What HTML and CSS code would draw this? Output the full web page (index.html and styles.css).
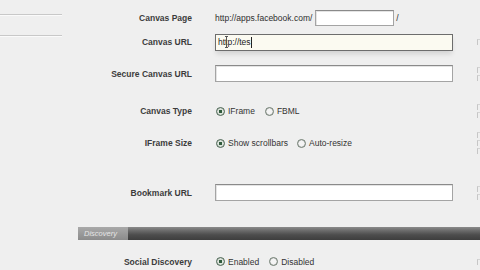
FILE: index.html
```html
<!DOCTYPE html>
<html>
<head>
<meta charset="utf-8">
<link rel="stylesheet" href="styles.css">
</head>
<body>
<div class="page">
  <aside class="side">
    <div class="rule r1"></div>
    <div class="rule r2"></div>
  </aside>
  <main class="main">
    <div class="topline"></div>
    <div class="form">
      <div class="row h19 m7">
        <div class="label">Canvas Page</div>
        <div class="value">
          <span class="txt">http://apps.facebook.com/</span>
          <span class="input short"></span>
          <span class="txt slash">/</span>
        </div>
        <div class="help"></div>
      </div>
      <div class="row h18 m6">
        <div class="label">Canvas URL</div>
        <div class="value">
          <span class="input wide focus"><span class="typed">http://tes</span><span class="caret"></span><span class="ibeam"></span></span>
        </div>
        <div class="help"><i class="mk"></i></div>
      </div>
      <div class="row h19 m13">
        <div class="label">Secure Canvas URL</div>
        <div class="value"><span class="input wide"></span></div>
        <div class="help"><i class="mk"></i><i class="mk"></i></div>
      </div>
      <div class="row h18 m19">
        <div class="label">Canvas Type</div>
        <div class="value">
          <span class="radio on"></span><span class="opt">IFrame</span>
          <span class="radio"></span><span class="opt">FBML</span>
        </div>
        <div class="help"><i class="mk"></i><i class="mk"></i></div>
      </div>
      <div class="row h18 m12">
        <div class="label">IFrame Size</div>
        <div class="value">
          <span class="radio on"></span><span class="opt">Show scrollbars</span>
          <span class="radio gap2"></span><span class="opt">Auto-resize</span>
        </div>
        <div class="help"><i class="mk"></i><i class="mk"></i><i class="mk"></i></div>
      </div>
      <div class="row h19 m33">
        <div class="label">Bookmark URL</div>
        <div class="value"><span class="input wide"></span></div>
        <div class="help"><i class="mk"></i><i class="mk"></i></div>
      </div>
      <div class="bar"><span class="bartab">Discovery</span></div>
      <div class="row h19 m12">
        <div class="label">Social Discovery</div>
        <div class="value">
          <span class="radio on"></span><span class="opt">Enabled</span>
          <span class="radio"></span><span class="opt">Disabled</span>
        </div>
        <div class="help"><i class="mk"></i></div>
      </div>
    </div>
  </main>
</div>
</body>
</html>
```
FILE: styles.css
```css
html, body {
  margin: 0;
  padding: 0;
  background: #efefef;
  width: 480px;
  height: 270px;
  overflow: hidden;
  font-family: "Liberation Sans", Arial, sans-serif;
  color: #333;
}
.page {
  display: flex;
  gap: 16px;
  height: 270px;
}
.side {
  width: 62px;
  flex: none;
  display: flex;
  flex-direction: column;
}
.rule {
  height: 1px;
  background: #c8c8c8;
  box-shadow: 0 1px 0 #fafafa;
}
.r1 { margin-top: 14px; }
.r2 { margin-top: 20px; }
.main {
  flex: 1;
  display: flex;
  flex-direction: column;
  min-width: 0;
}
.topline {
  height: 1px;
  background: #e2e2e2;
  margin-top: 1px;
}
.form {
  display: flex;
  flex-direction: column;
}
.row {
  display: grid;
  grid-template-columns: 114px 238px 22px;
  column-gap: 23px;
  align-items: center;
}
.h18 { height: 18px; }
.h19 { height: 19px; }
.m6 { margin-top: 6px; }
.m7 { margin-top: 7px; }
.m12 { margin-top: 12px; }
.m13 { margin-top: 13px; }
.m19 { margin-top: 19px; }
.m33 { margin-top: 33px; }
.label {
  text-align: right;
  font-size: 8.5px;
  font-weight: bold;
  color: #3c3c3c;
  white-space: nowrap;
}
.value {
  display: flex;
  align-items: center;
  height: 100%;
  font-size: 8.5px;
  white-space: nowrap;
}
.txt { color: #2e2e2e; }
.slash { margin-left: 2px; }
.input {
  display: block;
  box-sizing: border-box;
  height: 17px;
  background: #fff;
  border: 1px solid #a4a4a4;
  border-top-color: #8a8a8a;
  box-shadow: inset 1px 1px 0 #e4e4e4;
}
.short {
  width: 79px;
  margin-left: 3px;
  height: 16px;
}
.wide {
  width: 238px;
}
.focus {
  position: relative;
  background: #fbfaf1;
  border-color: #6d6d6d;
  display: flex;
  align-items: center;
  padding-left: 2px;
  font-size: 8.5px;
  color: #222;
  box-shadow: 0 4px 5px -1px rgba(0,0,0,0.12);
}
.ibeam {
  position: absolute;
  left: 9px;
  top: 1px;
  width: 3px;
  height: 12px;
  border-top: 1px solid #555;
  border-bottom: 1px solid #555;
  box-sizing: border-box;
  background: linear-gradient(#555, #555) center / 1px 100% no-repeat;
}
.caret {
  display: inline-block;
  width: 1px;
  height: 11px;
  background: #222;
}
.radio {
  display: inline-block;
  box-sizing: border-box;
  width: 9px;
  height: 9px;
  border-radius: 50%;
  border: 1px solid #6f7d71;
  background: radial-gradient(circle, #f4f4f4 0 45%, #d0d0d0 70%);
  margin-left: 1px;
  margin-right: 3px;
  flex: none;
}
.radio.on {
  background: radial-gradient(circle, #2f5a3c 0 30%, #dfe6df 40%, #c9d2c9 75%);
  border-color: #4a6352;
}
.radio + .opt { margin-right: 9px; }
.radio.gap2 { margin-left: 0; }
.opt {
  color: #333;
  font-size: 8.5px;
}
.help {
  height: 100%;
  display: flex;
  flex-direction: column;
  justify-content: center;
  gap: 2px;
  padding-left: 1px;
}
.mk {
  display: block;
  width: 3px;
  height: 5px;
  border-left: 1px solid #c6c6c6;
  border-top: 1px solid #d4d4d4;
}
.bar {
  margin-top: 25px;
  height: 13px;
  background: linear-gradient(#8a8a8a 0, #6e6e6e 25%, #4d4d4d 60%, #3e3e3e 100%);
  display: flex;
  align-items: center;
}
.bartab {
  display: flex;
  align-items: center;
  width: 50px;
  height: 100%;
  box-sizing: border-box;
  padding-left: 6px;
  background: linear-gradient(#a9a9a9, #8b8b8b);
  color: #e6e6e6;
  font-size: 7.5px;
  font-style: italic;
  overflow: hidden;
}
```
